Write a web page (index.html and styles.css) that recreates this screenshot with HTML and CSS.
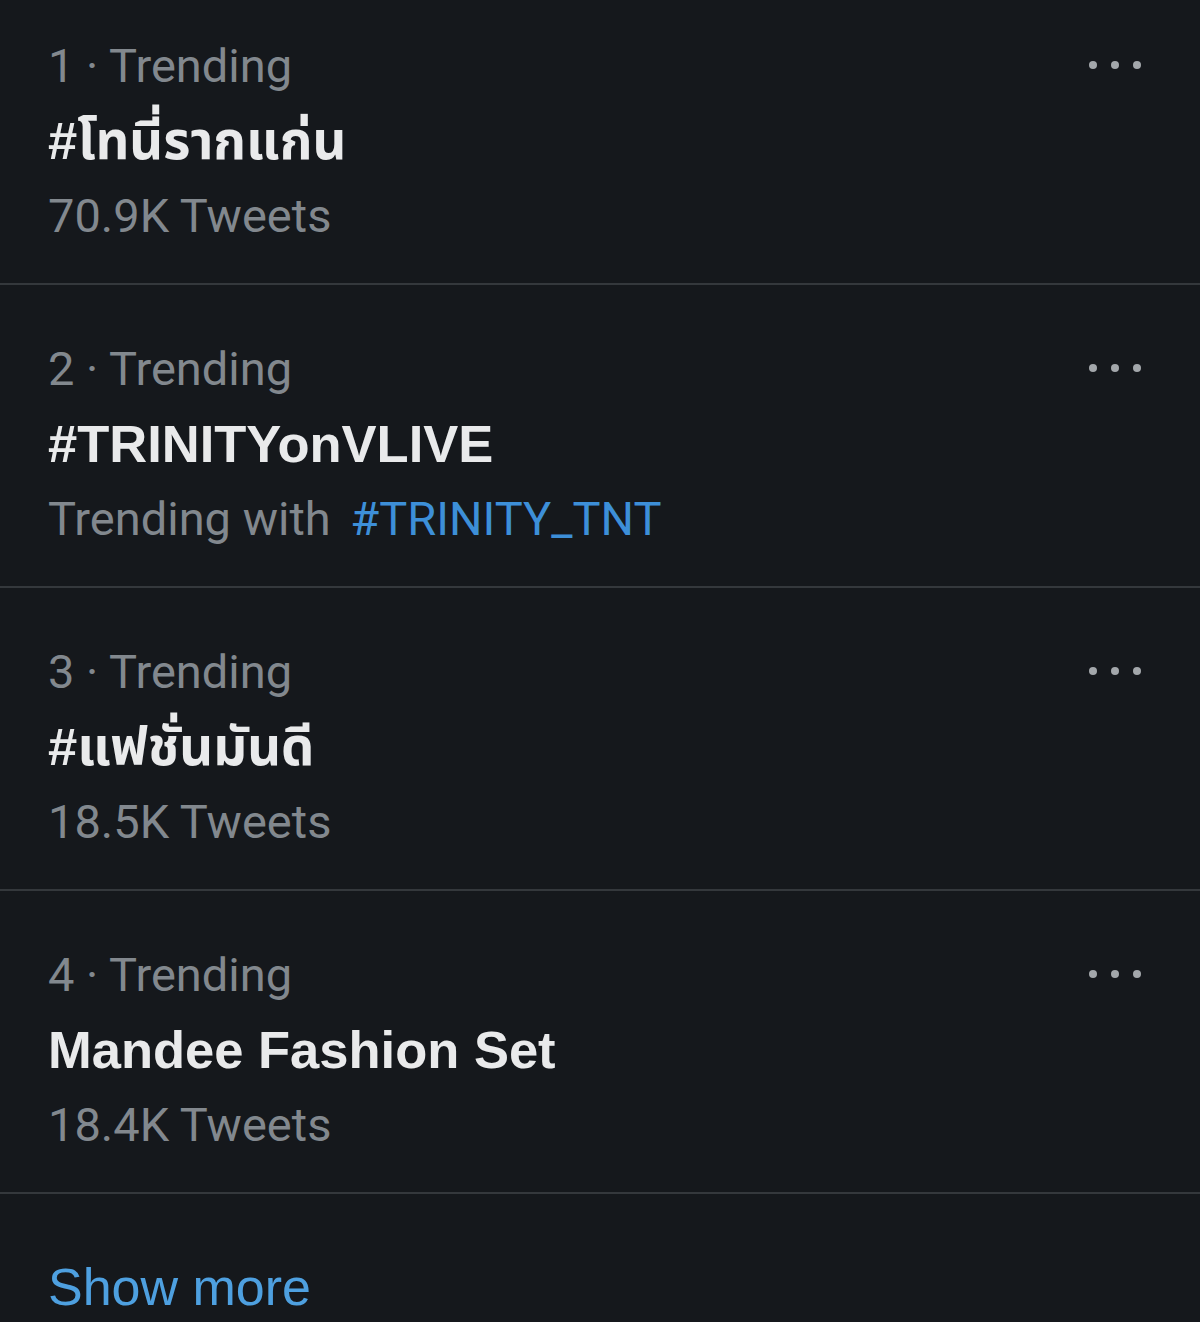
FILE: index.html
```html
<!DOCTYPE html>
<html lang="en">
<head>
    <meta charset="UTF-8">
    <meta name="viewport" content="width=device-width, initial-scale=1.0">
    <title>Trends</title>
    <link rel="stylesheet" href="styles.css">
</head>
<body>
    <div class="trends">
        <div class="trend">
            <div class="trend-body">
                <div class="meta">1 · Trending</div>
                <div class="title">#โทนี่รากแก่น</div>
                <div class="meta">70.9K Tweets</div>
            </div>
            <button class="more" aria-label="More">
                <svg viewBox="0 0 52 10" width="52" height="10"><circle cx="4" cy="5" r="4"/><circle cx="26" cy="5" r="4"/><circle cx="48" cy="5" r="4"/></svg>
            </button>
        </div>
        <div class="trend">
            <div class="trend-body">
                <div class="meta">2 · Trending</div>
                <div class="title">#TRINITYonVLIVE</div>
                <div class="meta">Trending with <a href="#" class="tag">#TRINITY_TNT</a></div>
            </div>
            <button class="more" aria-label="More">
                <svg viewBox="0 0 52 10" width="52" height="10"><circle cx="4" cy="5" r="4"/><circle cx="26" cy="5" r="4"/><circle cx="48" cy="5" r="4"/></svg>
            </button>
        </div>
        <div class="trend">
            <div class="trend-body">
                <div class="meta">3 · Trending</div>
                <div class="title">#แฟชั่นมันดี</div>
                <div class="meta">18.5K Tweets</div>
            </div>
            <button class="more" aria-label="More">
                <svg viewBox="0 0 52 10" width="52" height="10"><circle cx="4" cy="5" r="4"/><circle cx="26" cy="5" r="4"/><circle cx="48" cy="5" r="4"/></svg>
            </button>
        </div>
        <div class="trend">
            <div class="trend-body">
                <div class="meta">4 · Trending</div>
                <div class="title">Mandee Fashion Set</div>
                <div class="meta">18.4K Tweets</div>
            </div>
            <button class="more" aria-label="More">
                <svg viewBox="0 0 52 10" width="52" height="10"><circle cx="4" cy="5" r="4"/><circle cx="26" cy="5" r="4"/><circle cx="48" cy="5" r="4"/></svg>
            </button>
        </div>
        <a href="#" class="show-more">Show more</a>
    </div>
</body>
</html>
```

FILE: styles.css
```css
body {
    font-family: Roboto, "Noto Sans Thai", "Noto Sans", sans-serif;
    background-color: #15181c;
    margin: 0;
    padding: 0;
    overflow: hidden;
}
.trends {
    display: flex;
    flex-direction: column;
}
.trend {
    display: flex;
    justify-content: space-between;
    align-items: flex-start;
    padding: 46px 59px 30px 48px;
    border-bottom: 2px solid #34383c;
}
.trend:first-child {
    padding-top: 28px;
}
.trend-body {
    display: flex;
    flex-direction: column;
}
.meta {
    font-size: 47px;
    line-height: 75px;
    color: #82888e;
}
.title {
    font-family: "Liberation Sans", "Noto Sans Thai", Roboto, sans-serif;
    font-size: 52.5px;
    line-height: 75px;
    font-weight: 700;
    color: #e9eaeb;
}
.tag {
    color: #3d8fd8;
    text-decoration: none;
    margin-left: 8px;
}
.more {
    background: none;
    border: none;
    padding: 0;
    margin-top: 32px;
    fill: #a3a7ab;
    line-height: 0;
    cursor: pointer;
}
.show-more {
    display: block;
    padding: 56px 48px 0;
    font-family: "Liberation Sans", Arial, sans-serif;
    font-size: 52px;
    line-height: 75px;
    color: #4ea0e0;
    text-decoration: none;
}
```
